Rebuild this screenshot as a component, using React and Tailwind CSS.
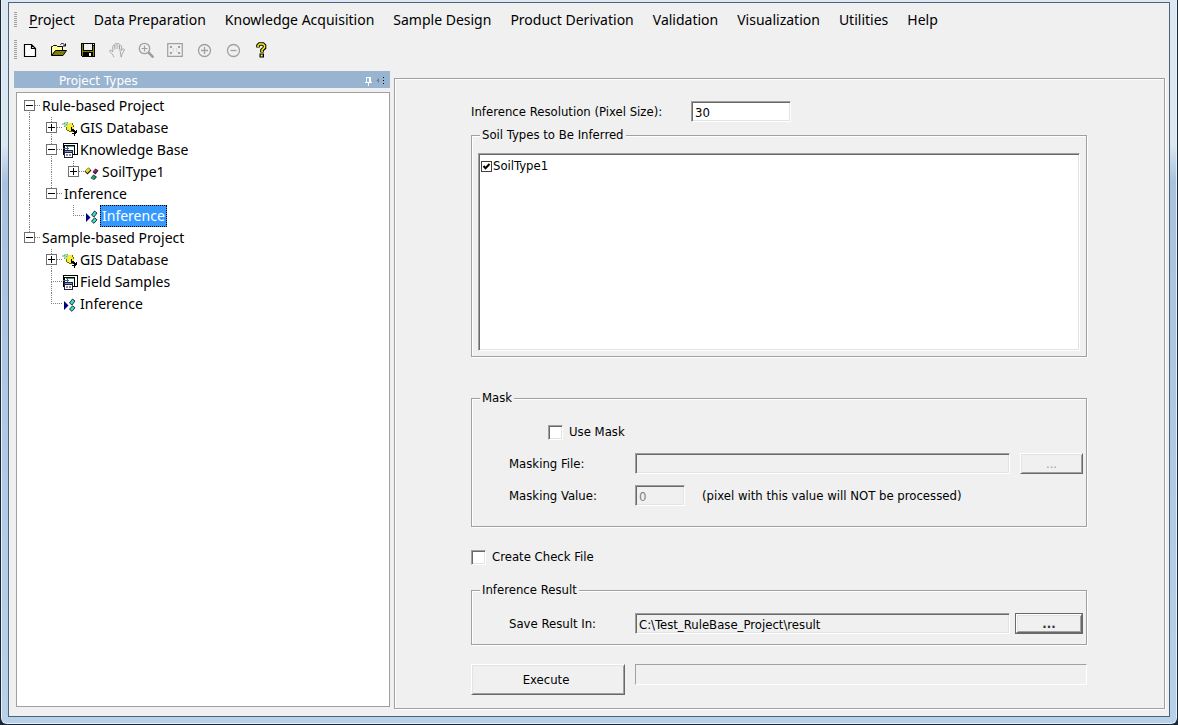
import React from "react";

const SUNKEN =
  "border border-t-[#a0a0a0] border-l-[#a0a0a0] border-r-white border-b-white shadow-[inset_1px_1px_0_#696969,inset_-1px_-1px_0_#e3e3e3]";
const RAISED =
  "border border-t-white border-l-white border-r-[#696969] border-b-[#696969] shadow-[inset_1px_1px_0_#e3e3e3,inset_-1px_-1px_0_#a0a0a0]";

const MENUS = [
  "Project",
  "Data Preparation",
  "Knowledge Acquisition",
  "Sample Design",
  "Product Derivation",
  "Validation",
  "Visualization",
  "Utilities",
  "Help",
];

function Grip({ className }) {
  return (
    <span
      className={`w-[3px] shrink-0 bg-[repeating-linear-gradient(to_bottom,#a0a0a0_0_1px,transparent_1px_2px)] ${className}`}
    />
  );
}

/* ---------- toolbar glyphs, drawn on a 16 x 16 grid ---------- */

const NewIcon = () => (
  <path d="M2.500 2.500h7l4 4v8h-11zM9.500 2.500v4h4" fill="#fff" stroke="#000" strokeWidth="1.200" />
);

const OpenIcon = () => (
  <>
    <path d="M.5 13.500v-9h1l1-1h3l1 1h5v4H5z" fill="#ffff9c" stroke="#000" />
    <path d="M.8 13.500 4.500 8.500h11L12 13.500z" fill="#808000" stroke="#000" />
    <path d="M9.500 2.500c1-1.500 3-1.500 4.500 1M14.500 1.500v2.500h-2.500" fill="none" stroke="#000" />
  </>
);

const SaveIcon = () => (
  <g shapeRendering="crispEdges">
    <path d="M1 1h14v14H2l-1-1z" fill="#000" />
    <path d="M2 2h1v12H2zM13 4h1v10h-1zM3 9h10v1H3z" fill="#808000" />
    <path d="M4 2h8v6H4z" fill="#efefef" />
    <path d="M13 2h1v1h-1z" fill="#efefef" />
    <path d="M9 11h2v3H9z" fill="#efefef" />
  </g>
);

const HandIcon = () => (
  <path
    d="M5 15.200C4.500 12.500 1.500 11 .6 8.800 1 7.500 2.800 8 3.800 10V4.200c.2-1.200 1.800-1.200 2 0V7.500M5.800 4.500V2.400c.3-1.200 2-1.200 2.200 0V7M8 2.200c.4-1.200 2.200-1 2.300.2V7.200M10.300 4c.3-1 2.100-1 2.300.2V8.500c.6-1.600 2.600-2.200 2.800-1C15 9.500 12.800 11.500 12.200 15.200z"
    fill="none"
    stroke="#a0a0a0"
    strokeWidth=".9"
  />
);

const ZoomIcon = () => (
  <g fill="none" stroke="#a0a0a0">
    <circle cx="6.500" cy="6.500" r="5.200" strokeWidth="1.300" />
    <path d="M6.500 3.500v6M3.500 6.500h6" strokeWidth="1.200" />
    <path d="m10.500 10.500 5 5" strokeWidth="2.600" />
  </g>
);

const ExtentIcon = () => (
  <g fill="none" stroke="#a0a0a0">
    <path d="M.7 1.700h14.600v12.600H.7z" strokeWidth="1.200" />
    <path d="M3.500 6V4.500H5M11 4.500h1.500V6M12.500 10v1.500H11M5 11.500H3.500V10" strokeWidth="1.200" />
    <path d="m4 5 2.500 2M12 5 9.500 7M12 11 9.500 9M4 11l2.500-2" strokeDasharray="1.500 1" />
  </g>
);

const PlusIcon = () => (
  <g fill="none" stroke="#a0a0a0" strokeWidth="1.300">
    <circle cx="8.500" cy="8.500" r="6" />
    <path d="M8.500 5v7M5 8.500h7" />
  </g>
);

const MinusIcon = () => (
  <g fill="none" stroke="#a0a0a0" strokeWidth="1.300">
    <circle cx="8.500" cy="8.500" r="6" />
    <path d="M5.500 8.500h6" />
  </g>
);

const HelpIcon = () => (
  <>
    <path
      d="M4 5.500V3.500L5.500 2H9l1.500 1.500v2.500L8 8v2.500"
      fill="none"
      stroke="#000"
      strokeWidth="3.600"
    />
    <path d="M5.500 11.500H10v4H5.500z" fill="#000" />
    <path
      d="M4 5V3.500L5.500 2H9l1.500 1.500v2L8 8v2"
      fill="none"
      stroke="#ffff00"
      strokeWidth="1.500"
    />
    <path d="M6.700 12.500h2v2h-2z" fill="#ffff00" />
  </>
);

const TOOLS = [
  ["New", NewIcon],
  ["Open", OpenIcon],
  ["Save", SaveIcon],
  ["Pan", HandIcon, true],
  ["Zoom", ZoomIcon, true],
  ["Full extent", ExtentIcon, true],
  ["Zoom in", PlusIcon, true],
  ["Zoom out", MinusIcon, true],
  ["Help", HelpIcon],
];

/* ---------- tree glyphs, drawn on a 16 x 16 grid ---------- */

const GisIcon = () => (
  <g shapeRendering="crispEdges">
    <path d="M0 3h2V2h4v1h2v3H6v2H4V7H2V5H0z" fill="#a8dca0" />
    <path d="M2 3h1v1H2zM4 4h1v1H4zM2 6h1v1H2zM5 2h1v1H5z" fill="#5fae72" />
    <path d="M6 3h4v1h1v2h1v5H7v-1H4V6h2z" fill="#f4ee38" />
    <path d="M10 3h1v2h1v2h-1V5h-1zM4 7h1v3H4zM5 10h2v1h4v1H7v-1H5z" fill="#6a6a00" />
    <path d="M9 7h1v2h2v1h1v1h1v-1h1v3h-1v1h-1v2h-1v-2h-2v-1h2v-1h-1v-1H9z" fill="#000" />
  </g>
);

const FormsIcon = () => (
  <g shapeRendering="crispEdges">
    <path d="M1 1h15v12H1z" fill="#000" />
    <path d="M2 2h13v10H2z" fill="#fff" />
    <path d="M2 3h11v1H2zM12 3h1v9h-1zM2 3h1v8H2z" fill="#000" />
    <path d="M4 4h8v1H4z" fill="#3f9aa0" />
    <path d="M1 6h6v1H1zM5 4h1v4H5z" fill="#406080" />
    <path d="M2 8h9v8H2z" fill="#202040" />
    <path d="M3 9h7v1H3z" fill="#8a8ad8" />
    <path d="M3 11h7v4H3z" fill="#fff" />
    <path d="M4 12h2v2H4zM7 12h2v2H7z" fill="#909090" />
  </g>
);

const SoilIcon = () => (
  <>
    <path d="m.5 7.500 4-4 3 3-4 4z" fill="#202000" />
    <path d="m1.300 7 3-3 2 2-3 3z" fill="#f0e020" />
    <path d="m8.500 8 3-3.500 3 2-3 4z" fill="#301030" />
    <path d="m9 7.500 2.500-2.500 2 1.500L11 9z" fill="#a02070" />
    <path d="m6.500 14 3-3.500 3.500 2.500-3 3z" fill="#103020" />
    <path d="m7 14 2.500-2.800 2.300 1.800-2.300 2.500z" fill="#20a070" />
  </>
);

const InferIcon = () => (
  <>
    <path d="M2 5v9l4.500-4.500z" fill="#000080" />
    <path d="m7.500 7 3-4 2.500 2-3 4z" fill="#40d8d0" stroke="#102828" strokeWidth=".9" />
    <path d="m7.500 13.300 3-3.500 2.500 2-3 3.500z" fill="#40d8d0" stroke="#102828" strokeWidth=".9" />
  </>
);

/*
 * One 22px column of connector lines.
 * u = up, d = down, r = right; "+" and "-" draw the expander box.
 */
function Lines({ code }) {
  const box = /[+-]/.test(code);
  return (
    <svg
      className="h-[22px] w-[22px] shrink-0"
      viewBox="0 0 22 22"
      fill="none"
      stroke="#808080"
      shapeRendering="crispEdges"
      aria-hidden="true"
    >
      {code.includes("u") && <path d="M11.500 0v11" strokeDasharray="1 1" />}
      {code.includes("d") && <path d="M11.500 11v11" strokeDasharray="1 1" />}
      {code.includes("r") && <path d="M11 10.500h11" strokeDasharray="1 1" />}
      {box && (
        <>
          <path d="M6.500 5.500h10v10h-10z" fill="#fff" stroke="#707070" />
          <path d="M8 10.500h7" stroke="#000" />
        </>
      )}
      {code.includes("+") && <path d="M11.500 7v7" stroke="#000" />}
    </svg>
  );
}

const TREE = [
  { label: "Rule-based Project", lines: ["-rd"] },
  { label: "GIS Database", lines: ["ud", "+urd"], icon: GisIcon },
  { label: "Knowledge Base", lines: ["ud", "-urd"], icon: FormsIcon },
  { label: "SoilType1", lines: ["ud", "ud", "+ur"], icon: SoilIcon },
  { label: "Inference", lines: ["ud", "-ur"] },
  { label: "Inference", lines: ["ud", "", "ur"], icon: InferIcon, selected: true },
  { label: "Sample-based Project", lines: ["-ur"] },
  { label: "GIS Database", lines: ["", "+urd"], icon: GisIcon },
  { label: "Field Samples", lines: ["", "urd"], icon: FormsIcon },
  { label: "Inference", lines: ["", "ur"], icon: InferIcon },
];

function TreeRow({ label, lines, icon: Icon, selected }) {
  return (
    <li className="flex h-[22px] items-center" role="treeitem" aria-selected={!!selected}>
      {lines.map((code, i) => (
        <Lines key={i} code={code} />
      ))}
      {Icon && (
        <svg className="h-4 w-4 shrink-0" viewBox="0 0 16 16" aria-hidden="true">
          <Icon />
        </svg>
      )}
      <span
        className={
          selected
            ? "border border-dotted border-black bg-[#3399ff] px-px leading-5 whitespace-nowrap text-white"
            : "px-[2px] leading-5 whitespace-nowrap"
        }
      >
        {label}
      </span>
    </li>
  );
}

function Group({ title, className, children }) {
  return (
    <fieldset
      className={`min-w-0 border border-[#a0a0a0] px-[6px] shadow-[1px_1px_0_#fff,inset_1px_1px_0_#fff] ${className}`}
    >
      <legend className="ml-[2px] bg-[#f0f0f0] px-[2px] leading-4">{title}</legend>
      {children}
    </fieldset>
  );
}

function Check({ id, label }) {
  return (
    <div className="flex h-4 items-center gap-[6px]">
      <span className="grid">
        <input
          id={id}
          type="checkbox"
          className={`peer col-start-1 row-start-1 h-[15px] w-[15px] appearance-none bg-white ${SUNKEN}`}
        />
        <svg
          className="pointer-events-none invisible col-start-1 row-start-1 h-[15px] w-[15px] peer-checked:visible"
          viewBox="0 0 15 15"
        >
          <path d="M4 7l2.500 2.500L11 5" fill="none" stroke="#000" strokeWidth="2" />
        </svg>
      </span>
      <label htmlFor={id}>{label}</label>
    </div>
  );
}

export default function App() {
  return (
    <div className="flex min-h-screen bg-[#1d2733] pl-px font-['Noto_Sans','Open_Sans',sans-serif] text-black">
      <div className="mr-px mb-px flex flex-1 rounded-b-md border-x border-b border-[#e8f1fa] bg-linear-to-b from-[#dbe7f3] from-20% via-[#a9c3df] via-25% to-[#b7d1eb] px-[6px] pt-[2px] pb-[6px]">
        <div className="flex min-w-0 flex-1 flex-col border border-[#4f6378] bg-[#f0f0f0] pr-1 pb-[7px] pl-[5px]">
          <nav className="flex h-[34px] items-center gap-[12px]" aria-label="Main menu">
            <Grip className="h-4" />
            <div className="flex gap-[19px] text-sm leading-5">
              {MENUS.map((m, i) => (
                <button key={m} type="button" className="whitespace-nowrap">
                  {i === 0 ? (
                    <>
                      <span className="underline underline-offset-2">P</span>roject
                    </>
                  ) : (
                    m
                  )}
                </button>
              ))}
            </div>
          </nav>

          <div className="flex h-[26px] items-center" role="toolbar" aria-label="Tools">
            <Grip className="h-5" />
            <div className="-ml-[2px] flex">
              {TOOLS.map(([name, Icon, disabled]) => (
                <button
                  key={name}
                  type="button"
                  aria-label={name}
                  disabled={disabled}
                  className="flex w-[29px] justify-center"
                >
                  <svg className="h-4 w-4" viewBox="0 0 16 16" aria-hidden="true">
                    <Icon />
                  </svg>
                </button>
              ))}
            </div>
          </div>

          <div className="flex flex-1 gap-1 pt-2">
            <aside className="flex w-[376px] shrink-0 flex-col pb-[2px]">
              <header className="flex h-[17px] items-center justify-between bg-[#99b4d1] pt-[2px] pr-1 pl-[45px] font-['DejaVu_Sans',sans-serif] text-[12px] leading-4 text-white">
                <h2>Project Types</h2>
                <svg className="h-[13px] w-[21px]" viewBox="0 0 21 13" aria-hidden="true">
                  <g shapeRendering="crispEdges">
                    <path d="M1 3h5v5h1v1H4v3H3V9H0V8h1z" fill="#fff" />
                    <path d="M2 4h2v4H2z" fill="#99b4d1" />
                    <path d="M18 3h1v1h-1zM18 6h1v1h-1zM18 9h1v1h-1z" fill="#000" />
                  </g>
                  <path d="M14 4v5l-2.500-2.500z" fill="#6f7f90" />
                </svg>
              </header>
              <div className="mt-1 ml-[2px] flex-1 border border-[#a0a0a0] bg-white pt-[2px] pl-px">
                <ul className="text-sm" role="tree" aria-label="Project Types">
                  {TREE.map((row, i) => (
                    <TreeRow key={i} {...row} />
                  ))}
                </ul>
              </div>
            </aside>

            <main className="mt-[7px] min-w-0 flex-1 border border-[#a0a0a0] pt-[22px] pr-[77px] pb-[13px] pl-[76px] font-['DejaVu_Sans_Condensed','DejaVu_Sans',sans-serif] text-[13px] leading-4 shadow-[1px_1px_0_#fff,inset_1px_1px_0_#fff]">
              <div className="flex items-center">
                <label htmlFor="resolution" className="w-[220px]">
                  Inference Resolution (Pixel Size):
                </label>
                <input
                  id="resolution"
                  defaultValue="30"
                  className={`h-[21px] w-[100px] bg-white px-[3px] pt-px ${SUNKEN}`}
                />
              </div>

              <Group title="Soil Types to Be Inferred" className="mt-[5px] pb-[5px]">
                <div className={`mt-[10px] h-[198px] bg-white px-[2px] py-1 ${SUNKEN}`}>
                  <div className="flex items-center gap-px">
                    <span className="grid">
                      <input
                        id="soil1"
                        type="checkbox"
                        defaultChecked
                        className="peer col-start-1 row-start-1 h-[11px] w-[11px] appearance-none border border-[#404040] bg-white"
                      />
                      <svg
                        className="pointer-events-none invisible col-start-1 row-start-1 h-[11px] w-[11px] peer-checked:visible"
                        viewBox="0 0 11 11"
                      >
                        <path d="M2.500 5 4.500 7.200 8.500 3" fill="none" stroke="#000" strokeWidth="2" />
                      </svg>
                    </span>
                    <label htmlFor="soil1">SoilType1</label>
                  </div>
                </div>
              </Group>

              <Group title="Mask" className="mt-[33px] pb-5">
                <div className="mt-[18px] ml-[70px]">
                  <Check id="use-mask" label="Use Mask" />
                </div>
                <div className="mt-[13px] ml-[31px] flex items-center">
                  <label htmlFor="mask-file" className="w-[126px] shrink-0">
                    Masking File:
                  </label>
                  <input
                    id="mask-file"
                    disabled
                    className={`h-[21px] min-w-0 flex-1 bg-[#f0f0f0] px-[3px] pt-px ${SUNKEN}`}
                  />
                  <button
                    type="button"
                    disabled
                    aria-label="Browse for masking file"
                    className={`mr-[-3px] ml-[10px] h-[21px] w-[63px] text-[#a0a0a0] ${RAISED}`}
                  >
                    ...
                  </button>
                </div>
                <div className="mt-[11px] ml-[31px] flex items-center">
                  <label htmlFor="mask-value" className="w-[126px] shrink-0">
                    Masking Value:
                  </label>
                  <input
                    id="mask-value"
                    disabled
                    defaultValue="0"
                    className={`h-[21px] w-[50px] bg-[#f0f0f0] px-[3px] pt-px text-[#808080] ${SUNKEN}`}
                  />
                  <span className="ml-[17px]">(pixel with this value will NOT be processed)</span>
                </div>
              </Group>

              <div className="mt-[22px]">
                <Check id="check-file" label="Create Check File" />
              </div>

              <Group title="Inference Result" className="mt-[17px] pb-[10px]">
                <div className="mt-[15px] ml-[31px] flex items-center">
                  <label htmlFor="save-in" className="w-[126px] shrink-0">
                    Save Result In:
                  </label>
                  <input
                    id="save-in"
                    readOnly
                    defaultValue="C:\Test_RuleBase_Project\result"
                    className={`h-[21px] min-w-0 flex-1 bg-[#f0f0f0] px-[3px] pt-px ${SUNKEN}`}
                  />
                  <div className="mr-[-3px] ml-[5px] flex border border-[#696969]">
                    <button
                      type="button"
                      aria-label="Browse for result folder"
                      className={`h-[19px] w-[66px] leading-3 font-bold text-[#333] ${RAISED}`}
                    >
                      ...
                    </button>
                  </div>
                </div>
              </Group>

              <div className="mt-[19px] flex items-start gap-[10px]">
                <button type="button" className={`h-[31px] w-[154px] pr-1 ${RAISED}`}>
                  Execute
                </button>
                <div
                  role="progressbar"
                  aria-label="Inference progress"
                  className="h-[21px] flex-1 border border-t-[#a0a0a0] border-r-white border-b-white border-l-[#a0a0a0]"
                />
              </div>
            </main>
          </div>
        </div>
      </div>
    </div>
  );
}
